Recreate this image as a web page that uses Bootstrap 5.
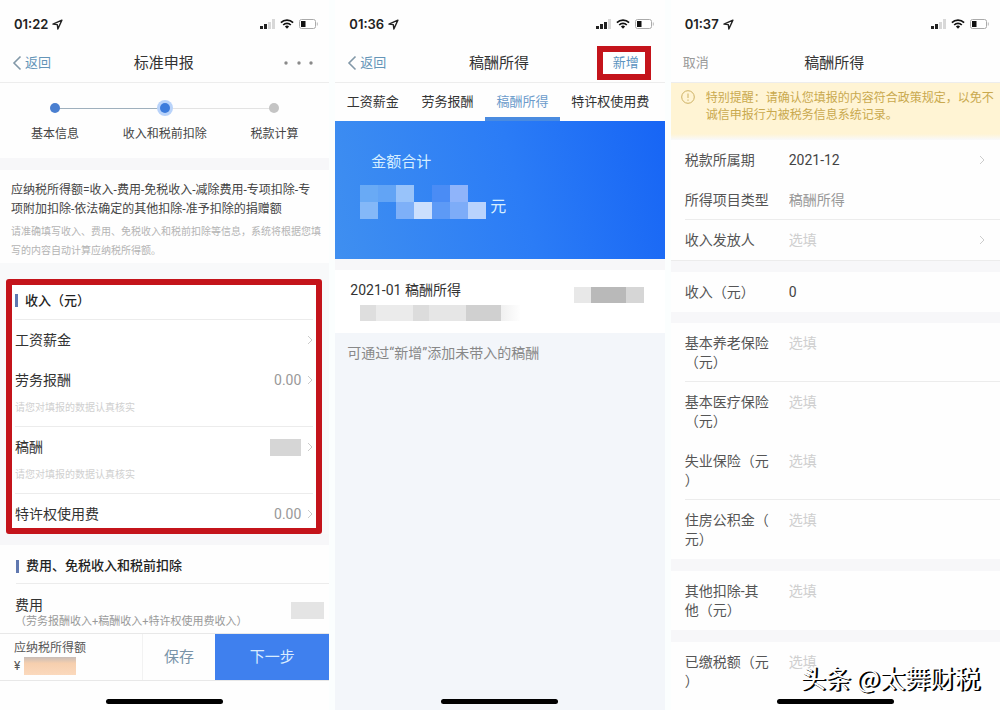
<!DOCTYPE html>
<html lang="zh-CN">
<head>
<meta charset="utf-8">
<meta name="viewport" content="width=device-width, initial-scale=1">
<title>个人所得税 标准申报</title>
<link href="https://cdn.jsdelivr.net/npm/bootstrap@5.3.0/dist/css/bootstrap.min.css" rel="stylesheet">
<style>
body{font-family:Roboto,"Noto Sans CJK SC",sans-serif;font-size:14px;line-height:20px;color:#444;background:#fbfefe}
.screens{display:grid;grid-template-columns:repeat(3,minmax(0,1fr));gap:6px;min-height:100vh}
.phone{background:#fefefe;display:flex;flex-direction:column;min-width:0}
.status{height:44px;padding:4px 10px 0 14px;color:#222}
.clock{font:600 13px/20px Inter,sans-serif}
.icons{display:flex;align-items:center;gap:5px}
.topbar{display:grid;grid-template-columns:1fr auto 1fr;align-items:center;height:39px;padding:0 14px 0 12px;border-bottom:1px solid #ededed}
.topbar h1{font-size:15px;line-height:20px;font-weight:400;margin:0;color:#333}
.navlink{font-size:13px;color:#6495b8;text-decoration:none;display:inline-flex;align-items:center;gap:3px}
.cancel{color:#999}
.plain{background:none;border:0;padding:0}
.addnew{border:6px solid #c4141b;background:#fff;color:#5b93c0;font-size:13px;line-height:22px;padding:0 6px 0 10px}
.band{height:12px;background:#f7f7f9;flex:none}
.band.thin{height:11px}
.steps{display:grid;grid-template-columns:repeat(3,1fr);height:75px;padding:16px 0 0;font-size:12px;text-align:center;margin:0;list-style:none}
.steps li{position:relative}
.steps li+li::before{content:"";position:absolute;height:1px;background:#e3e3e3;top:9px;left:-50%;width:100%}
.steps li.now::before{background:#9fb0bd}
.dot{display:block;position:relative;z-index:1;width:10px;height:10px;border-radius:50%;background:#4a7fd0;margin:4px auto 11px}
.now .dot{background:#3d7cdc;box-shadow:0 0 0 3px #b9d3fa}
.todo .dot{background:#c4c4c4}
.formula{padding:11px 7px 11px 11px;height:93px}
.formula p{margin:0;font-size:12px;line-height:19px;padding-right:9px}
.formula p+p{font-size:10px;color:#b4b4b4;margin-top:3px;padding-right:0}
.marked{margin:0 7px 0 6px;border:6px solid #c4141b;border-radius:3px;padding:0 3px}
.sect{display:flex;align-items:center;gap:7px;font-size:13px;line-height:20px;font-weight:500;height:35px;margin:0;color:#222}
.marked .sect{padding-bottom:3px}
.sect::before{content:"";width:3px;height:13px;background:#6078b0}
.item{height:40px;display:flex;align-items:center;justify-content:space-between;color:#333}
.item.last{height:34px;padding-top:6px}
.amt{color:#999;display:flex;align-items:center;gap:6px}
.tip{font-size:10px;line-height:16px;color:#d0d0d0;height:27px;margin:0}
.rule-b{border-bottom:1px solid #ececec}
.rule-t{border-top:1px solid #ececec}
.shade{display:block;width:31px;height:17px;background:#d6d6d6}
.costs{padding:11px 5px 0 15px;height:49px;color:#333}
.costs small{display:block;font-size:11px;line-height:14px;color:#999}
.costs .shade{width:33px;background:#e4e4e4;margin-top:7px}
.actions{display:grid;grid-template-columns:143px 72px 1fr;height:48px;border:solid #e8e8e8;border-width:1px 0;flex:none}
.actions button{border:0;border-radius:0;background:none;font-size:15px;color:#7893a8;padding:0}
.actions .next{background:#3f80ee;color:#d9ecff}
.due{padding:5px 0 0 14px;font-size:12px;line-height:18px;color:#555;border-right:1px solid #f2f2f2}
.blurred{width:52px;height:18px;background:linear-gradient(#c8bdb8,#f6cfae 35%,#fbd9bd)}
.homebar{width:117px;height:5px;border-radius:3px;background:#000;margin:auto auto 6px;flex:none}
.kinds{display:flex;height:38px;font-size:13px;padding-right:4px}
.kinds a{flex:75 1 0;text-align:center;color:#333;text-decoration:none;line-height:38px;white-space:nowrap;border-bottom:4px solid transparent}
.kinds a:last-child{flex:101 1 0}
.kinds a.on{color:#6b9bcb;border-color:#4a8be0}
.total{height:138px;padding:31px 36px 0;background:linear-gradient(75deg,#3f8ff0,#2b7cf6 55%,#1765f5);color:#d6eeff;font-size:15px}
.sum{display:flex;align-items:flex-end;gap:4px;margin-top:13px;font-size:16px;line-height:24px}
.pix{display:grid;grid-template-columns:repeat(7,18px);grid-auto-rows:17px;margin-left:-11px}
.record{padding:10px 15px 0;height:63px;background:#fff;color:#333}
.strip{width:160px;height:16px;margin:5px 0 0 10px;background:linear-gradient(90deg,#dedede 10%,#ebebeb 10% 33%,#dcdcdc 33% 43%,#e6e6e6 43% 66%,#d0d0d0 66% 88%,#f0f0f0 88%,#fefefe)}
.strip.short{width:70px;margin:7px 6px 0 0;background:linear-gradient(90deg,#e8e8e8 25%,#b9b9b9 25% 75%,#d6d6d6 75%)}
.rest{background:#f3f6fa;padding:10px 12px 0;color:#888}
.warn{display:flex;height:51px;padding:7px 6px 0 10px;gap:11px;background:#fff4d4;color:#c9a94e;font-size:12px;line-height:17px}
.warn p{margin:0}
.soft{height:6px;background:linear-gradient(#fff4d4,#f8f9fb)}
.field{display:grid;grid-template-columns:86px 1fr auto;gap:18px;align-items:start;margin-left:14px;padding:11px 15px 0 0;height:40px;line-height:19px}
.field.tall{height:59px}
.field.end{height:52px}
.field label{line-break:anywhere;color:#555}
.field input{border:0;background:none;padding:0;min-width:0;width:100%;line-height:19px;height:19px;color:#444;outline:0}
.field input::placeholder{color:#cfcfcf;opacity:1}
.field input:disabled{color:#999}
.watermark{position:absolute;right:20px;bottom:18px;font-family:"Noto Sans CJK SC",sans-serif;font-size:25px;line-height:30px;color:#fff;text-shadow:2px 1px 0 #000,1px 1px 0 #000;white-space:nowrap}
</style>
</head>
<body>
<svg class="d-none" aria-hidden="true">
<symbol id="loc" viewBox="0 0 12 12"><path d="M1 5.600 10.800 1.200 6.400 11 5.800 6.200z" fill="none" stroke="#222" stroke-width="1.500" stroke-linejoin="round"/></symbol>
<symbol id="wifi" viewBox="0 0 14 10"><g fill="none" stroke="#111" stroke-width="1.700"><path d="M.9 3.600a8.700 8.700 0 0 1 12.200 0"/><path d="M3.200 6a5.400 5.400 0 0 1 7.600 0"/></g><path d="M4.900 7.600a3 3 0 0 1 4.200 0L7 9.800z" fill="#111"/></symbol>
<symbol id="batt" viewBox="0 0 20 10"><rect x=".5" y=".5" width="16" height="9" rx="2" fill="#fff" stroke="#aaa"/><rect x="2" y="2" width="4.500" height="6" fill="#111"/><path d="M18.300 3.500v3" stroke="#bbb"/></symbol>
<symbol id="sig2" viewBox="0 0 15 10"><path d="M0 7h3v3H0zM4 5h3v5H4z" fill="#222"/><path d="M8 3h3v7H8zM12 0h3v10h-3z" fill="#d8d8d8"/></symbol>
<symbol id="sig3" viewBox="0 0 15 10"><path d="M0 7h3v3H0zM4 5h3v5H4zM8 3h3v7H8z" fill="#222"/><path d="M12 0h3v10h-3z" fill="#d8d8d8"/></symbol>
<symbol id="back" viewBox="0 0 10 16"><path d="M8.500 1.500 2 8l6.500 6.500" fill="none" stroke="#8298a8" stroke-width="1.600"/></symbol>
<symbol id="more" viewBox="0 0 6 10"><path d="m1 1 4 4-4 4" fill="none" stroke="#ccc"/></symbol>
</svg>
<main class="screens">
<section class="phone">
  <div class="status d-flex align-items-center justify-content-between">
    <span class="d-flex align-items-center gap-1"><span class="clock">01:22</span><svg width="11" height="11"><use href="#loc"/></svg></span>
    <span class="icons"><svg width="15" height="10"><use href="#sig2"/></svg><svg width="14" height="10"><use href="#wifi"/></svg><svg width="20" height="10"><use href="#batt"/></svg></span>
  </div>
  <header class="topbar">
    <a href="#" class="navlink"><svg width="10" height="16"><use href="#back"/></svg>返回</a>
    <h1>标准申报</h1>
    <button class="plain ms-auto d-flex" aria-label="更多"><svg width="32" height="6" fill="#8a8a8a"><circle cx="3" cy="3" r="1.700"/><circle cx="16" cy="3" r="1.700"/><circle cx="28" cy="3" r="1.700"/></svg></button>
  </header>
  <ol class="steps">
    <li><span class="dot"></span>基本信息</li>
    <li class="now"><span class="dot"></span>收入和税前扣除</li>
    <li class="todo"><span class="dot"></span>税款计算</li>
  </ol>
  <div class="band"></div>
  <div class="formula">
    <p>应纳税所得额=收入-费用-免税收入-减除费用-专项扣除-专项附加扣除-依法确定的其他扣除-准予扣除的捐赠额</p>
    <p>请准确填写收入、费用、免税收入和税前扣除等信息，系统将根据您填写的内容自动计算应纳税所得额。</p>
  </div>
  <div class="bg-light pt-3">
  <div class="marked bg-white">
    <h2 class="sect rule-b">收入（元）</h2>
    <div class="item"><span>工资薪金</span><span class="amt"><svg width="6" height="10"><use href="#more"/></svg></span></div>
    <div class="item"><span>劳务报酬</span><span class="amt">0.00<svg width="6" height="10"><use href="#more"/></svg></span></div>
    <p class="tip rule-b">请您对填报的数据认真核实</p>
    <div class="item"><span>稿酬</span><span class="amt"><span class="shade"></span><svg width="6" height="10"><use href="#more"/></svg></span></div>
    <p class="tip rule-b">请您对填报的数据认真核实</p>
    <div class="item last"><span>特许权使用费</span><span class="amt">0.00<svg width="6" height="10"><use href="#more"/></svg></span></div>
  </div>
  <div class="band thin"></div>
  </div>
  <div class="ps-3">
    <h2 class="sect rule-b mt-1">费用、免税收入和税前扣除</h2>
  </div>
  <div class="costs d-flex justify-content-between">
    <div><div>费用</div><small>（劳务报酬收入+稿酬收入+特许权使用费收入）</small></div>
    <span class="shade"></span>
  </div>
  <footer class="actions">
    <div class="due"><div>应纳税所得额</div><div class="d-flex gap-1"><span>¥</span><span class="blurred"></span></div></div>
    <button>保存</button>
    <button class="next">下一步</button>
  </footer>
  <div class="homebar"></div>
</section>

<section class="phone">
  <div class="status d-flex align-items-center justify-content-between">
    <span class="d-flex align-items-center gap-1"><span class="clock">01:36</span><svg width="11" height="11"><use href="#loc"/></svg></span>
    <span class="icons"><svg width="15" height="10"><use href="#sig3"/></svg><svg width="14" height="10"><use href="#wifi"/></svg><svg width="20" height="10"><use href="#batt"/></svg></span>
  </div>
  <header class="topbar">
    <a href="#" class="navlink"><svg width="10" height="16"><use href="#back"/></svg>返回</a>
    <h1>稿酬所得</h1>
    <button class="addnew ms-auto">新增</button>
  </header>
  <nav class="kinds"><a href="#">工资薪金</a><a href="#">劳务报酬</a><a href="#" class="on">稿酬所得</a><a href="#">特许权使用费</a></nav>
  <div class="total">
    <div>金额合计</div>
    <div class="sum">
      <div class="pix"><i style="background:#69aaf5"></i><i style="background:#62a4f5"></i><i style="background:#98c3fa"></i><i></i><i style="background:#4a8cf5"></i><i style="background:#8fb4fa"></i><i></i><i style="background:#84b8f8"></i><i></i><i style="background:#7eb0f8"></i><i style="background:#cbdffd"></i><i style="background:#5d9af6"></i><i style="background:#7dacf8"></i><i style="background:#b9d3fd"></i></div>
      <span>元</span>
    </div>
  </div>
  <div class="band thin"></div>
  <div class="record d-flex justify-content-between">
    <div>2021-01 稿酬所得<div class="strip"></div></div>
    <div class="strip short"></div>
  </div>
  <div class="rest flex-grow-1 d-flex flex-column">
    <p class="m-0">可通过“新增”添加未带入的稿酬</p>
    <div class="homebar"></div>
  </div>
</section>

<section class="phone position-relative">
  <div class="status d-flex align-items-center justify-content-between">
    <span class="d-flex align-items-center gap-1"><span class="clock">01:37</span><svg width="11" height="11"><use href="#loc"/></svg></span>
    <span class="icons"><svg width="15" height="10"><use href="#sig2"/></svg><svg width="14" height="10"><use href="#wifi"/></svg><svg width="20" height="10"><use href="#batt"/></svg></span>
  </div>
  <header class="topbar">
    <a href="#" class="navlink cancel">取消</a>
    <h1>稿酬所得</h1>
  </header>
  <div class="warn">
    <svg class="flex-shrink-0" width="14" height="14" fill="none" stroke="#cdb163"><circle cx="7" cy="7" r="6.300"/><path d="M7 3.500v4.500M7 9.500v1.300"/></svg>
    <p>特别提醒：请确认您填报的内容符合政策规定，以免不诚信申报行为被税务信息系统记录。</p>
  </div>
  <div class="soft"></div>
  <form>
    <div class="field"><label for="f1">税款所属期</label><input id="f1" value="2021-12"><svg class="mt-1" width="6" height="10"><use href="#more"/></svg></div>
    <div class="field rule-b"><label for="f2">所得项目类型</label><input id="f2" value="稿酬所得" disabled></div>
    <div class="field"><label for="f3">收入发放人</label><input id="f3" placeholder="选填"><svg class="mt-1" width="6" height="10"><use href="#more"/></svg></div>
    <div class="band rule-t"></div>
    <div class="field"><label for="f4">收入（元）</label><input id="f4" value="0"></div>
    <div class="band thin"></div>
    <div class="field tall rule-b"><label for="f5">基本养老保险（元）</label><input id="f5" placeholder="选填"></div>
    <div class="field tall"><label for="f6">基本医疗保险（元）</label><input id="f6" placeholder="选填"></div>
    <div class="field tall rule-b"><label for="f7">失业保险（元）</label><input id="f7" placeholder="选填"></div>
    <div class="field tall"><label for="f8">住房公积金（元）</label><input id="f8" placeholder="选填"></div>
    <div class="band"></div>
    <div class="field tall"><label for="f9">其他扣除-其他（元）</label><input id="f9" placeholder="选填"></div>
    <div class="band"></div>
    <div class="field end"><label for="f10">已缴税额（元）</label><input id="f10" placeholder="选填"></div>
  </form>
  <div class="homebar"></div>
  <div class="watermark">头条 @太舞财税</div>
</section>
</main>
<script src="https://cdn.jsdelivr.net/npm/bootstrap@5.3.0/dist/js/bootstrap.bundle.min.js"></script>
</body>
</html>
